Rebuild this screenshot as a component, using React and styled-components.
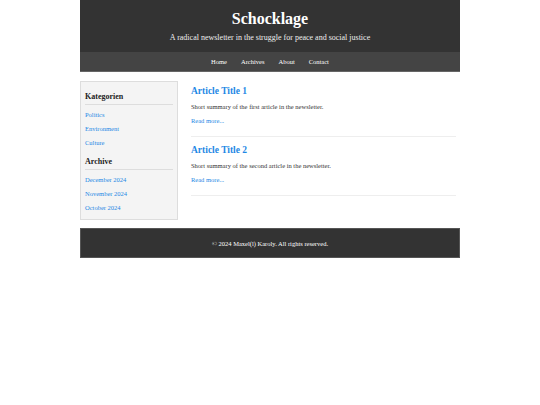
import React from 'react'
import styled, { createGlobalStyle } from 'styled-components'

const GlobalStyle = createGlobalStyle`
  body {
    margin: 0;
    background: #fff;
    font-family: "Liberation Serif", "DejaVu Serif", serif;
    color: #333;
  }
`

const Page = styled.div`
  width: 380px;
  margin: 0 auto;
`

const Header = styled.header`
  background: #333;
  color: #fff;
  text-align: center;
  padding: 9px 0 8px;
`

const Title = styled.h1`
  margin: 0;
  font-size: 16px;
  font-weight: bold;
  line-height: 20px;
`

const Subtitle = styled.p`
  margin: 3px 0 0;
  font-size: 8px;
  line-height: 12px;
  color: #eee;
`

const Nav = styled.nav`
  background: #444;
  display: flex;
  justify-content: center;
  gap: 14px;
  height: 19px;
  align-items: center;
  border-bottom: 1px solid #666;
`

const NavLink = styled.a`
  color: #fff;
  font-size: 6.5px;
  text-decoration: none;
`

const Main = styled.div`
  display: flex;
  gap: 13px;
  padding: 9px 4px 0 0;
`

const Sidebar = styled.aside`
  width: 98px;
  flex-shrink: 0;
  background: #f4f4f4;
  border: 1px solid #ddd;
  padding: 10px 4px 7px;
  box-sizing: border-box;
  align-self: flex-start;
`

const SideHeading = styled.h3`
  margin: 0;
  font-size: 8px;
  line-height: 10px;
  font-weight: bold;
  color: #222;
  padding-bottom: 2px;
  border-bottom: 1px solid #ddd;
`

const SideList = styled.ul`
  list-style: none;
  margin: 0 0 10px;
  padding: 0;
  &:last-child {
    margin-bottom: 0;
  }
`

const SideItem = styled.li`
  height: 14px;
  line-height: 14px;
  a {
    color: #1e88e5;
    font-size: 6.5px;
    text-decoration: none;
  }
`

const Content = styled.main`
  flex: 1;
  padding-top: 3px;
`

const Article = styled.article`
  border-bottom: 1px solid #eee;
  padding-bottom: 10px;
  margin-bottom: 6px;
`

const ArticleTitle = styled.h2`
  margin: 0;
  font-size: 9.5px;
  font-weight: bold;
  color: #1e88e5;
  line-height: 14px;
`

const Summary = styled.p`
  margin: 4px 0 0;
  font-size: 6.5px;
  line-height: 10px;
  color: #333;
`

const ReadMore = styled.a`
  display: block;
  margin-top: 4px;
  font-size: 6.5px;
  line-height: 10px;
  color: #1e88e5;
  text-decoration: none;
`

const Footer = styled.footer`
  margin-top: 8px;
  background: #333;
  color: #fff;
  height: 30px;
  border: 1px solid #555;
  box-sizing: border-box;
  display: flex;
  align-items: center;
  justify-content: center;
  font-size: 6.5px;
`

const categories = ['Politics', 'Environment', 'Culture']
const archive = ['December 2024', 'November 2024', 'October 2024']
const articles = [
  { title: 'Article Title 1', summary: 'Short summary of the first article in the newsletter.' },
  { title: 'Article Title 2', summary: 'Short summary of the second article in the newsletter.' },
]

export default function App() {
  return (
    <>
      <GlobalStyle />
      <Page>
        <Header>
          <Title>Schocklage</Title>
          <Subtitle>A radical newsletter in the struggle for peace and social justice</Subtitle>
        </Header>
        <Nav>
          <NavLink href="#">Home</NavLink>
          <NavLink href="#">Archives</NavLink>
          <NavLink href="#">About</NavLink>
          <NavLink href="#">Contact</NavLink>
        </Nav>
        <Main>
          <Sidebar>
            <SideHeading>Kategorien</SideHeading>
            <SideList>
              {categories.map((c) => (
                <SideItem key={c}><a href="#">{c}</a></SideItem>
              ))}
            </SideList>
            <SideHeading>Archive</SideHeading>
            <SideList>
              {archive.map((c) => (
                <SideItem key={c}><a href="#">{c}</a></SideItem>
              ))}
            </SideList>
          </Sidebar>
          <Content>
            {articles.map((a) => (
              <Article key={a.title}>
                <ArticleTitle>{a.title}</ArticleTitle>
                <Summary>{a.summary}</Summary>
                <ReadMore href="#">Read more...</ReadMore>
              </Article>
            ))}
          </Content>
        </Main>
        <Footer>© 2024 Maxel(l) Karoly. All rights reserved.</Footer>
      </Page>
    </>
  )
}
